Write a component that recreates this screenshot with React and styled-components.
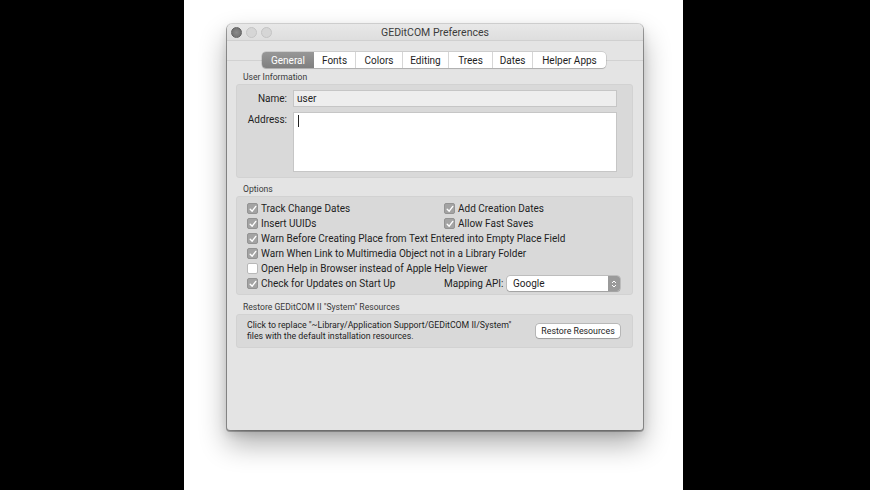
import React from 'react';
import styled, {createGlobalStyle} from 'styled-components';

const Global = createGlobalStyle`
  html, body { margin: 0; padding: 0; background: #000; }
  body { font-family: Roboto, "Liberation Sans", sans-serif; color: #1e1e1e; }
`;

const Page = styled.div`
  display: flex;
  width: 870px;
  height: 490px;
  overflow: hidden;
`;

const Side = styled.div`
  width: ${p => p.w}px;
  flex: ${p => p.grow ? 1 : 'none'};
  background: #000;
`;

const Stage = styled.div`
  width: 499px;
  background: #fff;
  padding: 24px 0 0 43px;
  box-sizing: border-box;
`;

const Window = styled.div`
  width: 416px;
  height: 406px;
  background: #e4e4e4;
  border-radius: 5px 5px 3px 3px;
  box-shadow: 0 0 0 1px rgba(0,0,0,0.14), 0 1px 0 1px rgba(0,0,0,0.25), 0 14px 28px rgba(0,0,0,0.32), 0 4px 10px rgba(0,0,0,0.12);
  display: flex;
  flex-direction: column;
  overflow: hidden;
`;

const TitleBar = styled.div`
  height: 16px;
  display: grid;
  grid-template-columns: 60px 1fr 60px;
  align-items: center;
  background: linear-gradient(#e8e8e8, #dedede);
  border-bottom: 1px solid #d0d0d0;
  padding: 0 4px;
`;

const Lights = styled.div`
  display: flex;
  gap: 4px;
`;

const Light = styled.span`
  width: 11px;
  height: 11px;
  border-radius: 50%;
  box-sizing: border-box;
  background: ${p => p.dark ? 'radial-gradient(circle, #8a8a8a, #6c6c6c)' : '#d6d6d6'};
  border: 1px solid ${p => p.dark ? '#626262' : '#c4c4c4'};
`;

const Title = styled.div`
  text-align: center;
  font-size: 10.5px;
  color: #3c3c3c;
`;

const TabPanel = styled.div`
  margin-top: 19px;
  border-top: 1px solid #d2d2d2;
  padding: 0 10px 0 9px;
  display: flex;
  flex-direction: column;
`;

const Tabs = styled.div`
  display: flex;
  align-self: flex-start;
  margin: -9px 0 0 26px;
  height: 16px;
  background: #fff;
  border-radius: 4px;
  box-shadow: 0 0 0 0.5px rgba(0,0,0,0.2), 0 1px 1px rgba(0,0,0,0.15);
  overflow: hidden;
`;

const Tab = styled.div`
  width: ${p => p.w}px;
  box-sizing: border-box;
  display: flex;
  align-items: center;
  justify-content: center;
  font-size: 10px;
  color: ${p => p.active ? '#fff' : '#1e1e1e'};
  background: ${p => p.active ? 'linear-gradient(#979797, #7f7f7f)' : 'transparent'};
  border-left: ${p => p.first || p.active || p.afterActive ? 'none' : '1px solid #d6d6d6'};
`;

const GroupLabel = styled.div`
  font-size: 8.6px;
  line-height: 12px;
  color: #3a3a3a;
  padding-left: 7px;
  margin-top: ${p => p.top}px;
  margin-bottom: 1px;
`;

const Box = styled.div`
  background: #d9d9d9;
  border: 1px solid #d2d2d2;
  border-radius: 3px;
  height: ${p => p.h}px;
  box-sizing: border-box;
`;

const InfoGrid = styled(Box)`
  display: grid;
  grid-template-columns: 50px 324px;
  grid-template-rows: 17px 60px;
  column-gap: 6px;
  row-gap: 5px;
  padding-top: 5px;
`;

const FieldLabel = styled.div`
  text-align: right;
  font-size: 10px;
  line-height: ${p => p.lh}px;
`;

const TextField = styled.div`
  background: ${p => p.grey ? '#eeeeee' : '#fff'};
  border: 1px solid #c6c6c6;
  box-sizing: border-box;
  font-size: 10px;
  line-height: 15px;
  padding: ${p => p.grey ? '0 3px' : '2px 4px'};
`;

const Caret = styled.span`
  display: block;
  width: 1px;
  height: 12px;
  background: #222;
`;

const OptionsGrid = styled(Box)`
  display: grid;
  grid-template-columns: 197px 1fr;
  grid-auto-rows: 15px;
  padding: 4px 0 0 10px;
`;

const Option = styled.label`
  display: flex;
  align-items: center;
  gap: 3px;
  font-size: 10px;
  white-space: nowrap;
  grid-column: ${p => p.span ? '1 / span 2' : 'auto'};
`;

const Check = styled.span`
  width: 11px;
  height: 11px;
  box-sizing: border-box;
  border-radius: 2px;
  display: flex;
  align-items: center;
  justify-content: center;
  background: ${p => p.on ? '#a3a3a3' : '#fff'};
  border: 1px solid ${p => p.on ? '#939393' : '#b8b8b8'};
`;

const MappingRow = styled.div`
  display: flex;
  align-items: center;
  padding-right: 12px;
  font-size: 10px;
  white-space: nowrap;
`;

const Popup = styled.div`
  width: 113px;
  height: 15px;
  margin-left: auto;
  display: flex;
  background: #fff;
  border-radius: 3px;
  box-shadow: 0 0 0 0.5px rgba(0,0,0,0.25), 0 1px 1px rgba(0,0,0,0.15);
  overflow: hidden;
  span { flex: 1; padding-left: 6px; line-height: 15px; }
`;

const Stepper = styled.div`
  width: 12px;
  background: #9a9a9a;
  display: flex;
  align-items: center;
  justify-content: center;
`;

const RestoreBox = styled(Box)`
  display: flex;
  align-items: center;
  justify-content: space-between;
  padding: 0 12px 0 10px;
`;

const RestoreText = styled.div`
  font-size: 8.75px;
  line-height: 11px;
`;

const Button = styled.div`
  width: 84px;
  height: 14px;
  background: #fff;
  border-radius: 3px;
  box-shadow: 0 0 0 0.5px rgba(0,0,0,0.3), 0 1px 1px rgba(0,0,0,0.15);
  font-size: 8.8px;
  display: flex;
  align-items: center;
  justify-content: center;
`;

const Tick = () => (
  <svg width="8" height="8" viewBox="0 0 8 8">
    <path d="M1.2 4.2 L3.2 6.2 L6.8 1.4" fill="none" stroke="#fff" strokeWidth="1.4" strokeLinecap="round" strokeLinejoin="round"/>
  </svg>
);

const CheckItem = ({on, span, children}) => (
  <Option span={span}>
    <Check on={on}>{on && <Tick/>}</Check>
    {children}
  </Option>
);

const tabs = [
  ['General', 52], ['Fonts', 41], ['Colors', 47], ['Editing', 46],
  ['Trees', 44], ['Dates', 40], ['Helper Apps', 74],
];

export default function App() {
  return (
    <Page>
      <Global/>
      <Side w={184}/>
      <Stage>
        <Window>
          <TitleBar>
            <Lights><Light dark/><Light/><Light/></Lights>
            <Title>GEDitCOM Preferences</Title>
            <div/>
          </TitleBar>
          <TabPanel>
            <Tabs>
              {tabs.map(([t, w], i) => (
                <Tab key={t} w={w} active={i === 0} first={i === 0} afterActive={i === 1}>{t}</Tab>
              ))}
            </Tabs>
            <GroupLabel top={3}>User Information</GroupLabel>
            <InfoGrid h={94}>
              <FieldLabel lh={17}>Name:</FieldLabel>
              <TextField grey>user</TextField>
              <FieldLabel lh={15}>Address:</FieldLabel>
              <TextField><Caret/></TextField>
            </InfoGrid>
            <GroupLabel top={5}>Options</GroupLabel>
            <OptionsGrid h={99}>
              <CheckItem on>Track Change Dates</CheckItem>
              <CheckItem on>Add Creation Dates</CheckItem>
              <CheckItem on>Insert UUIDs</CheckItem>
              <CheckItem on>Allow Fast Saves</CheckItem>
              <CheckItem on span>Warn Before Creating Place from Text Entered into Empty Place Field</CheckItem>
              <CheckItem on span>Warn When Link to Multimedia Object not in a Library Folder</CheckItem>
              <CheckItem span>Open Help in Browser instead of Apple Help Viewer</CheckItem>
              <CheckItem on>Check for Updates on Start Up</CheckItem>
              <MappingRow>
                Mapping API:
                <Popup>
                  <span>Google</span>
                  <Stepper>
                    <svg width="6" height="10" viewBox="0 0 6 10">
                      <path d="M1 4 L3 2 L5 4 M1 6 L3 8 L5 6" fill="none" stroke="#fff" strokeWidth="1"/>
                    </svg>
                  </Stepper>
                </Popup>
              </MappingRow>
            </OptionsGrid>
            <GroupLabel top={6}>Restore GEDitCOM II "System" Resources</GroupLabel>
            <RestoreBox h={34}>
              <RestoreText>
                Click to replace "~Library/Application Support/GEDitCOM II/System"<br/>
                files with the default installation resources.
              </RestoreText>
              <Button>Restore Resources</Button>
            </RestoreBox>
          </TabPanel>
        </Window>
      </Stage>
      <Side grow/>
    </Page>
  );
}
